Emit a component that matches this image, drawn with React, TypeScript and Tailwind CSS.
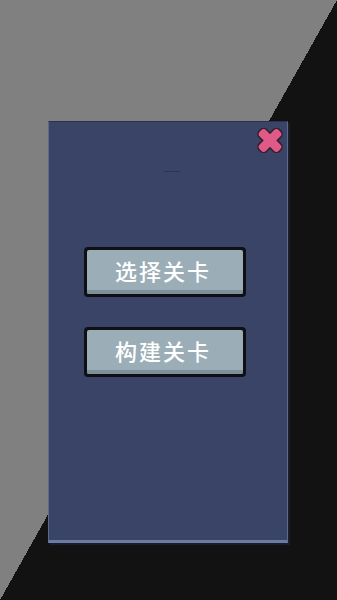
import React from "react";

function CloseIcon() {
  return (
    <svg width="26" height="25" viewBox="0 0 26 25" className="block">
      <g fill="#3a1c2b" stroke="#3a1c2b" strokeWidth="3" strokeLinejoin="round">
        <rect x="-0.5" y="8" width="27" height="9" rx="3.5" transform="rotate(45 13 12.5)" />
        <rect x="-0.5" y="8" width="27" height="9" rx="3.5" transform="rotate(-45 13 12.5)" />
      </g>
      <g fill="#de5a88">
        <rect x="-0.5" y="8" width="27" height="9" rx="3.5" transform="rotate(45 13 12.5)" />
        <rect x="-0.5" y="8" width="27" height="9" rx="3.5" transform="rotate(-45 13 12.5)" />
      </g>
    </svg>
  );
}

function PixelButton({ label }: { label: string }) {
  return (
    <div className="w-[162px] h-[50px] rounded-[4px] bg-[#0f0f16] p-[3px]">
      <div className="flex h-full flex-col overflow-hidden rounded-[2px] bg-[#9badb7]">
        <div className="flex flex-1 items-center justify-center pr-[4px]">
          <span
            className="text-[22px] leading-none font-medium text-white tracking-[2px]"
            style={{ fontFamily: '"Noto Sans CJK SC", "Noto Sans", sans-serif' }}
          >
            {label}
          </span>
        </div>
        <div className="h-[4px] bg-[#7e8f9a]" />
      </div>
    </div>
  );
}

export default function App() {
  return (
    <div className="relative h-[600px] w-[337px] overflow-hidden bg-[linear-gradient(to_bottom_right,#808080_50%,#121212_50%)] pl-[48px] pt-[121px]">
      <div className="relative h-[422px] w-[240px] border-x border-t border-x-[#5b6990] border-t-[#2b3350] border-b-[3px] border-b-[#6b7ba3] bg-[#3a4466] shadow-[2px_2px_0_#1a1d2a]">
        <div className="absolute right-[4px] top-[6px]">
          <CloseIcon />
        </div>
        <div className="flex flex-col">
          <div className="ml-[115px] mt-[49px] h-[1px] w-[16px] bg-[#2e3652]" />
          <div className="ml-[35px] mt-[75px] flex flex-col gap-[30px]">
            <PixelButton label="选择关卡" />
            <PixelButton label="构建关卡" />
          </div>
        </div>
      </div>
    </div>
  );
}
